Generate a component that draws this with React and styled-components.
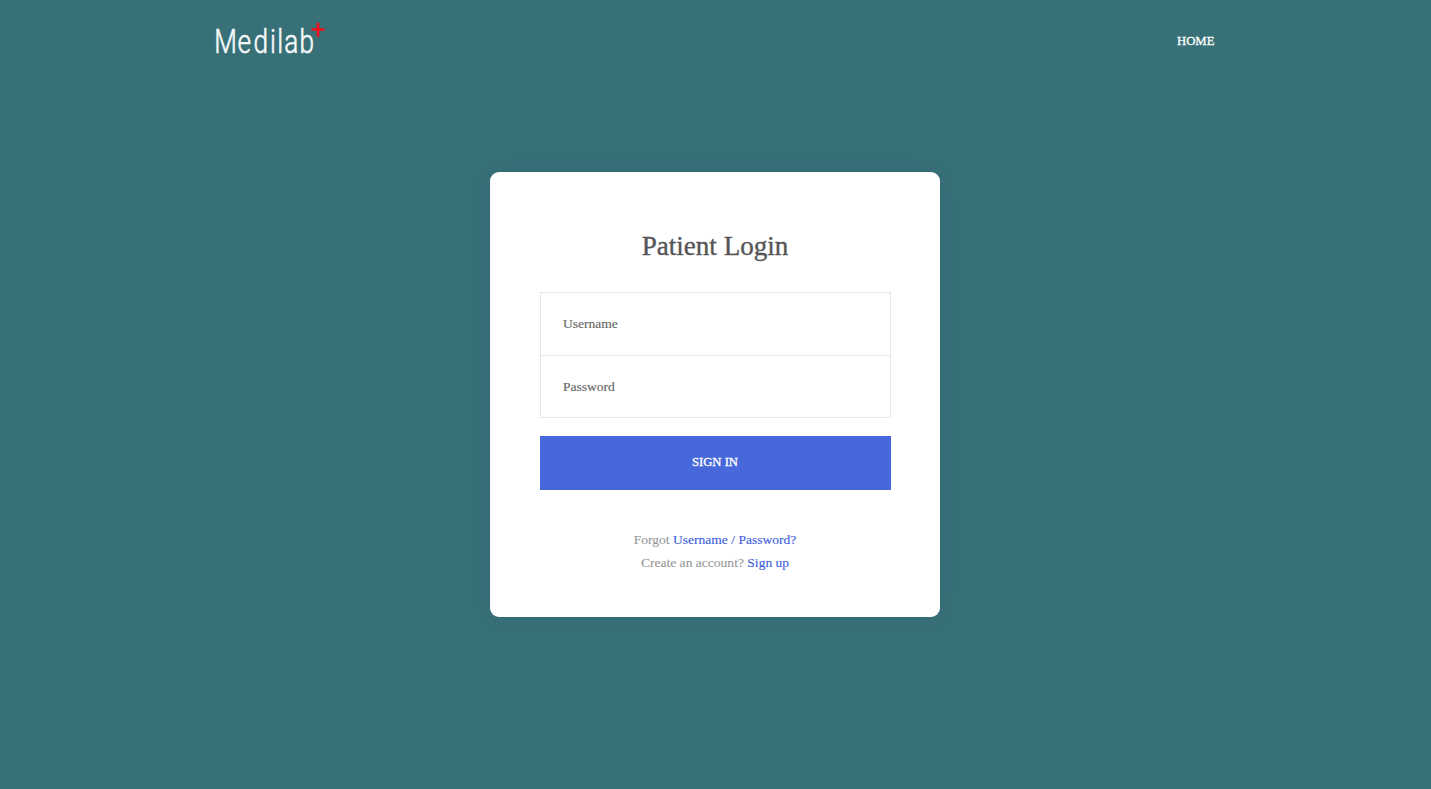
import React from "react";
import styled, { createGlobalStyle } from "styled-components";

const GlobalStyle = createGlobalStyle`
  * { box-sizing: border-box; }
  body {
    margin: 0;
    background: #387078;
    font-family: "Liberation Serif", "Times New Roman", serif;
    font-size: 13.5px;
    color: #999;
  }
  a { text-decoration: none; }
`;

const Page = styled.div`
  min-height: 100vh;
  overflow: hidden;
`;

const Header = styled.header`
  width: 1000px;
  height: 82px;
  margin: 0 auto;
  display: flex;
  justify-content: space-between;
  align-items: center;
`;

const Brand = styled.a`
  display: block;
  height: 42px;
  svg { overflow: visible; }
`;

const NavLink = styled.a`
  margin-right: 1px;
  color: #fff;
  font-size: 12.75px;
  line-height: 20px;
  -webkit-text-stroke: 0.3px #fff;
`;

const Card = styled.main`
  width: 450px;
  height: 445px;
  margin: 90px auto 0;
  padding: 58px 49px 0 50px;
  background: #fff;
  border-radius: 9px;
  box-shadow: 0 0 20px rgba(40, 74, 104, 0.2);
  text-align: center;
  position: relative;
  left: -0.5px;
`;

const Title = styled.h1`
  margin: 0 1px 30px 0;
  font-size: 27.1px;
  font-weight: 400;
  line-height: 32px;
  color: #555;
  -webkit-text-stroke: 0.35px #555;
`;

const Fields = styled.div`
  border: 1px solid #e6e6e6;
  margin-bottom: 18px;
`;

const Input = styled.input`
  display: block;
  width: 100%;
  height: ${({ $last }) => ($last ? 61 : 63)}px;
  padding: 0 22px;
  border: 0;
  border-bottom: ${({ $last }) => ($last ? "0" : "1px solid #e6e6e6")};
  outline: none;
  background: transparent;
  font: inherit;
  &::placeholder {
    color: #666;
    opacity: 1;
    -webkit-text-stroke: 0.15px #666;
  }
`;

const SubmitButton = styled.button`
  display: block;
  width: 100%;
  height: 54px;
  padding: 0 1px 2px 0;
  border: 0;
  background: #4668db;
  color: #fff;
  font: 12.65px "Liberation Serif", "Times New Roman", serif;
  -webkit-text-stroke: 0.3px #fff;
`;

const Help = styled.div`
  margin: 38px 1px 0 0;
  line-height: 23px;
  letter-spacing: 0.02px;
  -webkit-text-stroke: 0.15px currentColor;
`;

const HelpLink = styled.a`
  color: #3e60dc;
`;

function Logo() {
  return (
    <svg width="110" height="42" viewBox="0 0 110 42" role="img" aria-label="Medilab+">
      <text
        transform="scale(0.78 1)"
        x="-2.3 27.6 48 69.2 78.4 87.6 107.2"
        y="33"
        fill="#f4f8f8"
        stroke="#f4f8f8"
        strokeWidth="0.65"
        fontFamily="Roboto, sans-serif"
        fontWeight="300"
        fontSize="33.5"
      >
        Medilab
      </text>
      <path d="M95.5 9.5h13M102 2.8v14" stroke="#f90d18" strokeWidth="2.6" />
    </svg>
  );
}

export default function App() {
  return (
    <Page>
      <GlobalStyle />
      <Header>
        <Brand href="#"><Logo /></Brand>
        <NavLink href="#">HOME</NavLink>
      </Header>
      <Card>
        <Title>Patient Login</Title>
        <form onSubmit={(e) => e.preventDefault()}>
          <Fields>
            <Input type="text" placeholder="Username" />
            <Input type="password" placeholder="Password" $last />
          </Fields>
          <SubmitButton>SIGN IN</SubmitButton>
        </form>
        <Help>
          <div>Forgot <HelpLink href="#">Username / Password?</HelpLink></div>
          <div>Create an account? <HelpLink href="#">Sign up</HelpLink></div>
        </Help>
      </Card>
    </Page>
  );
}
